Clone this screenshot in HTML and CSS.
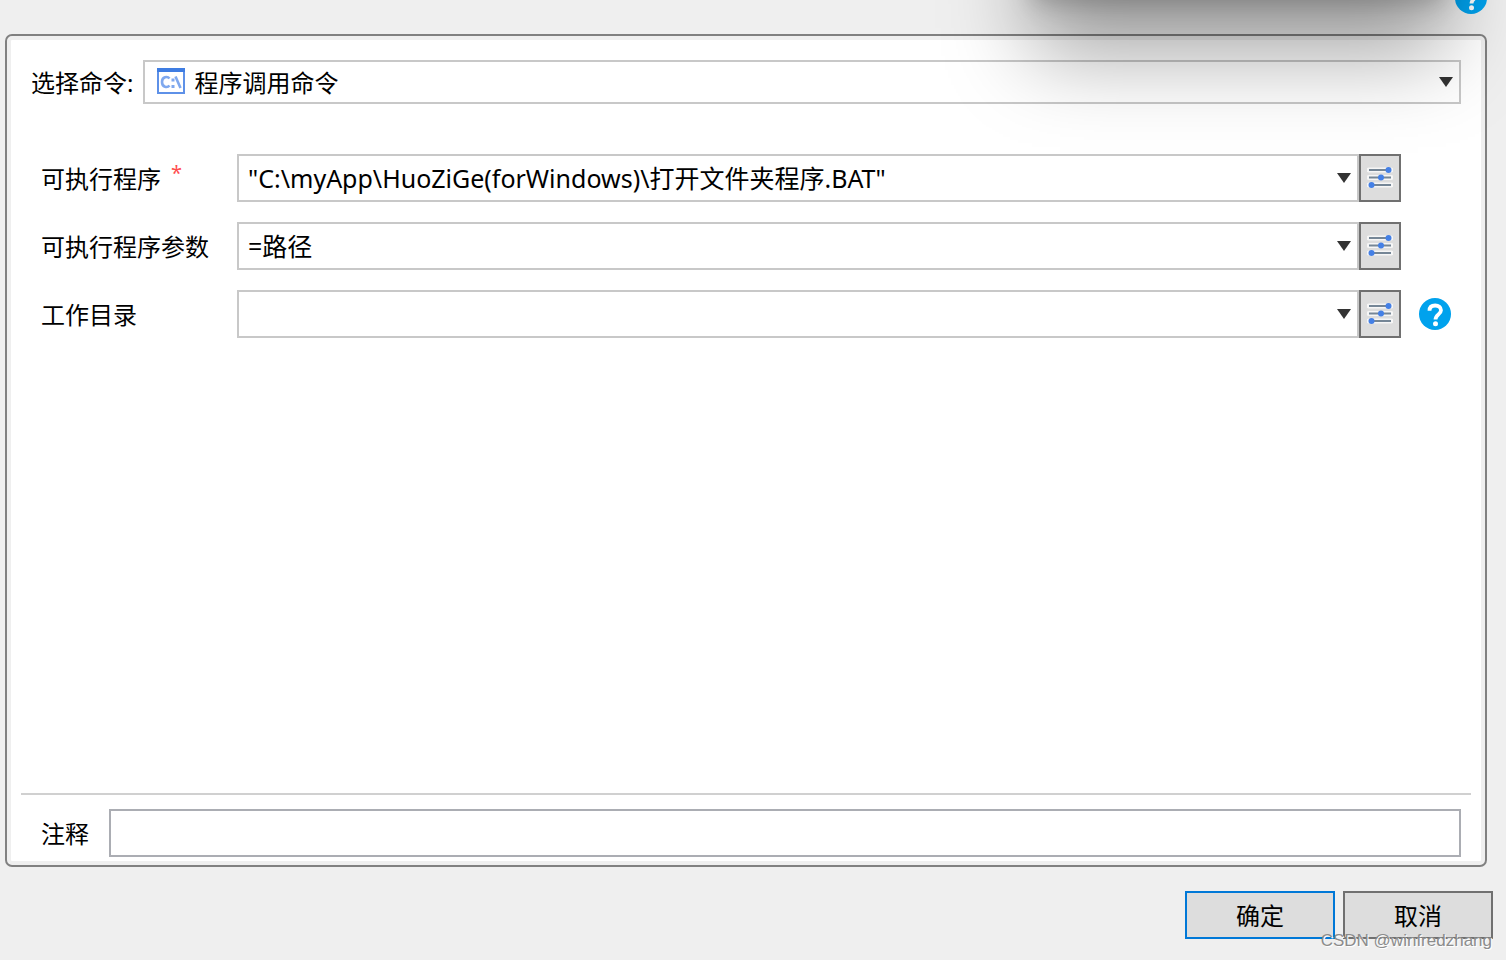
FILE: index.html
```html
<!DOCTYPE html>
<html lang="zh-CN">
<head>
<meta charset="utf-8">
<title>程序调用命令</title>
<link rel="stylesheet" href="styles.css">
</head>
<body>
<svg class="sprites" aria-hidden="true">
  <symbol id="help" viewBox="0 0 32 32">
    <circle cx="16" cy="16" r="16" fill="#00a2ed"/>
    <path d="M10.500 12.800c0-3.600 2.300-5.300 5.700-5.300s5.800 1.700 5.800 4.800c0 4-5.500 4.200-5.500 9.200" fill="none" stroke="#fff" stroke-width="3.800"/>
    <circle cx="16.500" cy="25.800" r="2.500" fill="#fff"/>
  </symbol>
  <symbol id="sliders" viewBox="0 0 26 24">
    <path d="M2 4h22M2 11.500h22M2 19h22" stroke="#f6f6f6" stroke-width="5" stroke-linecap="round"/>
    <path d="M2 4h22M2 11.500h22M2 19h22" stroke="#758696" stroke-width="2"/>
    <g fill="#4480e6"><circle cx="21.500" cy="4" r="3"/><circle cx="14" cy="11.500" r="3"/><circle cx="4.500" cy="19" r="3"/></g>
  </symbol>
  <symbol id="arrow" viewBox="0 0 14 10"><path d="M0 0h14L7 10z" fill="#333"/></symbol>
</svg>

<header class="top">
  <button class="help" type="button" aria-label="帮助"><svg><use href="#help"/></svg></button>
</header>

<main class="panel">
  <div class="command">
    <label for="command">选择命令:</label>
    <div class="picker">
      <select id="command"><option>程序调用命令</option></select>
      <svg class="console" viewBox="0 0 28 26" aria-hidden="true">
        <path d="M1 1h26v24H1z" fill="#fff" stroke="#5e91e8" stroke-width="2"/>
        <path d="M0 0h28v4H0z" fill="#3f7de2"/>
        <path d="M12.500 10.500C10.500 8 5 8.500 5 14s5.500 6 7.500 3.500M18.500 8.500l5 11.500" fill="none" stroke="#7fa8ee" stroke-width="2.600"/>
        <path d="M14.500 10.500h3v3h-3zM14.500 17h3v3h-3z" fill="#7fa8ee"/>
      </svg>
      <svg class="arrow"><use href="#arrow"/></svg>
    </div>
  </div>

  <div class="fields">
    <label for="program">可执行程序<span class="required">*</span></label>
    <div class="field">
      <div class="combo"><input id="program" type="text" value="&quot;C:\myApp\HuoZiGe(forWindows)\打开文件夹程序.BAT&quot;"><button type="button" aria-label="展开"><svg><use href="#arrow"/></svg></button></div>
      <button class="edit" type="button" aria-label="编辑"><svg><use href="#sliders"/></svg></button>
    </div>

    <label for="args">可执行程序参数</label>
    <div class="field">
      <div class="combo"><input id="args" type="text" value="=路径"><button type="button" aria-label="展开"><svg><use href="#arrow"/></svg></button></div>
      <button class="edit" type="button" aria-label="编辑"><svg><use href="#sliders"/></svg></button>
    </div>

    <label for="folder">工作目录</label>
    <div class="field">
      <div class="combo"><input id="folder" type="text"><button type="button" aria-label="展开"><svg><use href="#arrow"/></svg></button></div>
      <button class="edit" type="button" aria-label="编辑"><svg><use href="#sliders"/></svg></button>
    </div>
    <button class="help" type="button" aria-label="帮助"><svg><use href="#help"/></svg></button>
  </div>

  <div class="note">
    <label for="note">注释</label>
    <input id="note" type="text">
  </div>
</main>

<footer class="actions">
  <button class="primary" type="button">确定</button>
  <button type="button">取消</button>
</footer>

<div class="shade" aria-hidden="true"></div>
<div class="watermark">CSDN @winfredzhang</div>
</body>
</html>
```
FILE: styles.css
```css
* { box-sizing: border-box; }

body {
  position: relative;
  display: flex;
  flex-direction: column;
  min-height: 100vh;
  margin: 0;
  overflow: hidden;
  background: #efefef;
  color: #000;
  font: 24px/32px "Noto Sans", "Noto Sans CJK SC", sans-serif;
}

button, input, select {
  font: inherit;
  color: inherit;
  border-radius: 0;
}

label { padding-top: 2px; }

.sprites { position: absolute; width: 0; height: 0; }

.top {
  display: flex;
  justify-content: flex-end;
  align-items: flex-end;
  height: 34px;
  padding: 0 19px 20px 0;
}

.help {
  width: 32px;
  height: 32px;
  padding: 0;
  border: 0;
  background: none;
}

.help svg { display: block; width: 32px; height: 32px; }
.top .help { flex: none; }

.panel {
  flex: 1;
  display: flex;
  flex-direction: column;
  margin: 0 19px 0 5px;
  padding: 20px 20px 4px 10px;
  border: 2px solid #808080;
  border-radius: 7px;
  background: #fff;
  box-shadow: inset 0 0 0 4px #efefef;
}

.command {
  display: flex;
  align-items: center;
  gap: 10px;
  padding: 4px 4px 0 14px;
}

.picker { position: relative; flex: 1; }

.picker select {
  display: block;
  width: 100%;
  height: 44px;
  padding: 2px 40px 0 49px;
  border: 2px solid #c8c8c8;
  background: #fff;
  appearance: none;
}

.console { position: absolute; left: 14px; top: 8px; width: 28px; height: 26px; }
.arrow { position: absolute; right: 8px; top: 17px; width: 14px; height: 10px; }

.fields {
  display: grid;
  grid-template-columns: 186px 1fr 32px;
  column-gap: 10px;
  row-gap: 20px;
  align-items: center;
  padding: 50px 14px 0 24px;
}

.fields label { grid-column: 1; white-space: nowrap; }

.required {
  margin-left: 10px;
  color: #ff4d4f;
  font-size: 20px;
  line-height: 1;
  vertical-align: 8px;
}

.field { display: flex; margin-right: 8px; }

.combo {
  flex: 1;
  display: flex;
  height: 48px;
  border: 2px solid #c8c8c8;
  background: #fff;
}

.combo input {
  flex: 1;
  min-width: 0;
  padding: 0 9px;
  border: 0;
  background: none;
  font-size: 25px;
}

.combo button {
  width: 26px;
  padding: 0 6px;
  border: 0;
  background: none;
}

.combo svg { display: block; width: 14px; height: 10px; }

.edit {
  width: 42px;
  padding: 0 6px;
  border: 2px solid #707070;
  background: #ddd;
}

.edit svg { display: block; width: 26px; height: 24px; }

.note {
  display: flex;
  align-items: center;
  gap: 20px;
  margin: auto -6px 0 4px;
  padding: 14px 10px 4px 20px;
  border-top: 2px solid #d0d0d0;
}

.note input {
  flex: 1;
  min-width: 0;
  height: 48px;
  padding: 0 9px;
  border: 2px solid #abadb3;
  background: #fff;
}

.actions {
  display: flex;
  justify-content: flex-end;
  gap: 8px;
  padding: 24px 13px 21px;
}

.actions button {
  width: 150px;
  height: 48px;
  padding: 2px 0 0;
  border: 2px solid #707070;
  background: #ddd;
}

.actions .primary { border-color: #0078d7; }

.shade {
  position: absolute;
  right: 60px;
  bottom: 100%;
  width: 414px;
  height: 300px;
  box-shadow: 0 56px 80px rgba(0, 0, 0, .34), 0 2px 24px rgba(0, 0, 0, .24);
  pointer-events: none;
}

.watermark {
  position: absolute;
  right: 14px;
  bottom: 8px;
  color: #8c8c8c;
  font: 17px/22px "Liberation Sans", Arial, sans-serif;
  text-shadow: 1px 1px 0 #fff;
  pointer-events: none;
}
```
